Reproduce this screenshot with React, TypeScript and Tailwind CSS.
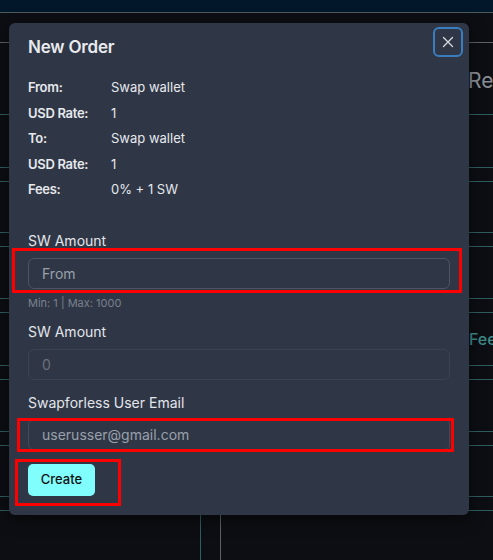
import React from "react";

const font = { fontFamily: '"Inter", "Liberation Sans", sans-serif' };

function BgRows() {
  const rows = [
    { h: 30, c: "border-[#5b6166]" },
    { h: 72, c: "border-[#2f5e60]" },
    { h: 53, c: "border-[#2f5e60]" },
    { h: 14, c: "border-[#2f5e60]" },
    { h: 51, c: "border-[#2f5e60]" },
    { h: 14, c: "border-[#2f5e60]" },
    { h: 52, c: "border-[#2f5e60]" },
    { h: 14, c: "border-[#2f5e60]" },
    { h: 53, c: "border-[#2f5e60]" },
    { h: 14, c: "border-[#2f5e60]" },
    { h: 52, c: "border-[#2f5e60]" },
    { h: 14, c: "border-[#2f5e60]" },
    { h: 51, c: "border-[#2f5e60]" },
    { h: 14, c: "border-[#2f5e60]" },
  ];
  const hs: Record<number, string> = {
    30: "h-[30px]",
    72: "h-[72px]",
    53: "h-[53px]",
    14: "h-[14px]",
    51: "h-[51px]",
    52: "h-[52px]",
  };
  return (
    <div className="flex flex-col">
      {rows.map((r, i) => (
        <div key={i} className={`${hs[r.h]} border-b ${r.c} relative`}>
          {i === 1 && (
            <div className="flex justify-end pt-[26px] pr-0">
              <span className="text-[21px] leading-[24px] text-[#8a8f96] w-[25px] overflow-hidden whitespace-nowrap">Re</span>
            </div>
          )}
        </div>
      ))}
    </div>
  );
}

export default function App() {
  return (
    <div className="relative w-full h-[560px] overflow-hidden bg-[#0c0e13]" style={font}>
      {/* background page */}
      <div className="h-[13px] bg-[#03172a] border-b border-[#4f5a60]" />
      <BgRows />
      <div className="flex h-[49px]">
        <div className="w-[201px] border-r border-[#2f5e60]" />
        <div className="w-[20px] border-r border-[#5b6166]" />
      </div>
      <div className="absolute right-0 top-[328px] text-[16px] leading-[22px] text-[#3f8a8a] w-[24px] overflow-hidden whitespace-nowrap font-medium">
        Fee
      </div>

      {/* modal */}
      <div className="absolute left-[9px] top-[23px] w-[460px] h-[492px] rounded-[6px] bg-[#2f3747] shadow-[0_4px_16px_rgba(0,0,0,0.5)] px-[19px] pt-[12px]">
        <button className="absolute right-[6px] top-[4px] w-[30px] h-[30px] rounded-[6px] border-2 border-[#3b7ec0] flex items-center justify-center text-[#d3d7dd]">
          <svg width="12" height="12" viewBox="0 0 12 12" fill="none" stroke="currentColor" strokeWidth="1.4" strokeLinecap="round">
            <path d="M1.5 1.5 L10.5 10.5 M10.5 1.5 L1.5 10.5" />
          </svg>
        </button>

        <h2 className="h-[24px] leading-[24px] text-[17px] font-semibold text-[#e8eaee] tracking-[-0.2px]">New Order</h2>

        <div className="mt-[16px] text-[13px] text-[#e6e8ec]">
          {[
            ["From:", "Swap wallet"],
            ["USD Rate:", "1"],
            ["To:", "Swap wallet"],
            ["USD Rate:", "1"],
            ["Fees:", "0% + 1 SW"],
          ].map(([k, v], i) => (
            <div key={i} className="flex h-[25.5px] items-center">
              <span className="w-[83px] font-semibold tracking-[-0.3px]">{k}</span>
              <span>{v}</span>
            </div>
          ))}
        </div>

        <div className="mt-[28px] h-[20px] leading-[20px] text-[14px] text-[#e3e5ea]">SW Amount</div>
        <div className="relative mt-[7px]">
          <div className="h-[31px] rounded-[6px] border border-[#4c5465] flex items-center px-[13px] text-[14px] text-[#9aa0aa]">
            From
          </div>
          <div className="absolute left-[-16px] right-[-12px] top-[-10px] bottom-[-4px] border-[3px] border-[#ff0000]" />
        </div>
        <div className="mt-[6px] h-[16px] leading-[16px] text-[11px] text-[#7a808c]">Min: 1 | Max: 1000</div>

        <div className="mt-[11px] h-[20px] leading-[20px] text-[14px] text-[#e3e5ea]">SW Amount</div>
        <div className="mt-[7px] h-[31px] rounded-[6px] border border-[#3b4353] flex items-center px-[13px] text-[14px] text-[#6b717c]">
          0
        </div>

        <div className="mt-[13px] h-[20px] leading-[20px] text-[14px] text-[#e3e5ea]">Swapforless User Email</div>
        <div className="relative mt-[6px]">
          <div className="h-[31px] rounded-[6px] border border-[#434b5b] flex items-center px-[13px] text-[14px] text-[#9aa0aa]">
            userusser@gmail.com
          </div>
          <div className="absolute left-[-11px] right-[-4px] top-[-1px] bottom-[-2px] border-[3px] border-[#ff0000]" />
        </div>

        <div className="mt-[14px] relative w-[67px]">
          <button className="w-[67px] h-[32px] rounded-[5px] bg-[#80fdfd] text-[13px] text-[#111] font-medium">Create</button>
          <div className="absolute left-[-13px] right-[-26px] top-[-5px] bottom-[-10px] border-[3px] border-[#ff0000]" />
        </div>
      </div>
    </div>
  );
}
